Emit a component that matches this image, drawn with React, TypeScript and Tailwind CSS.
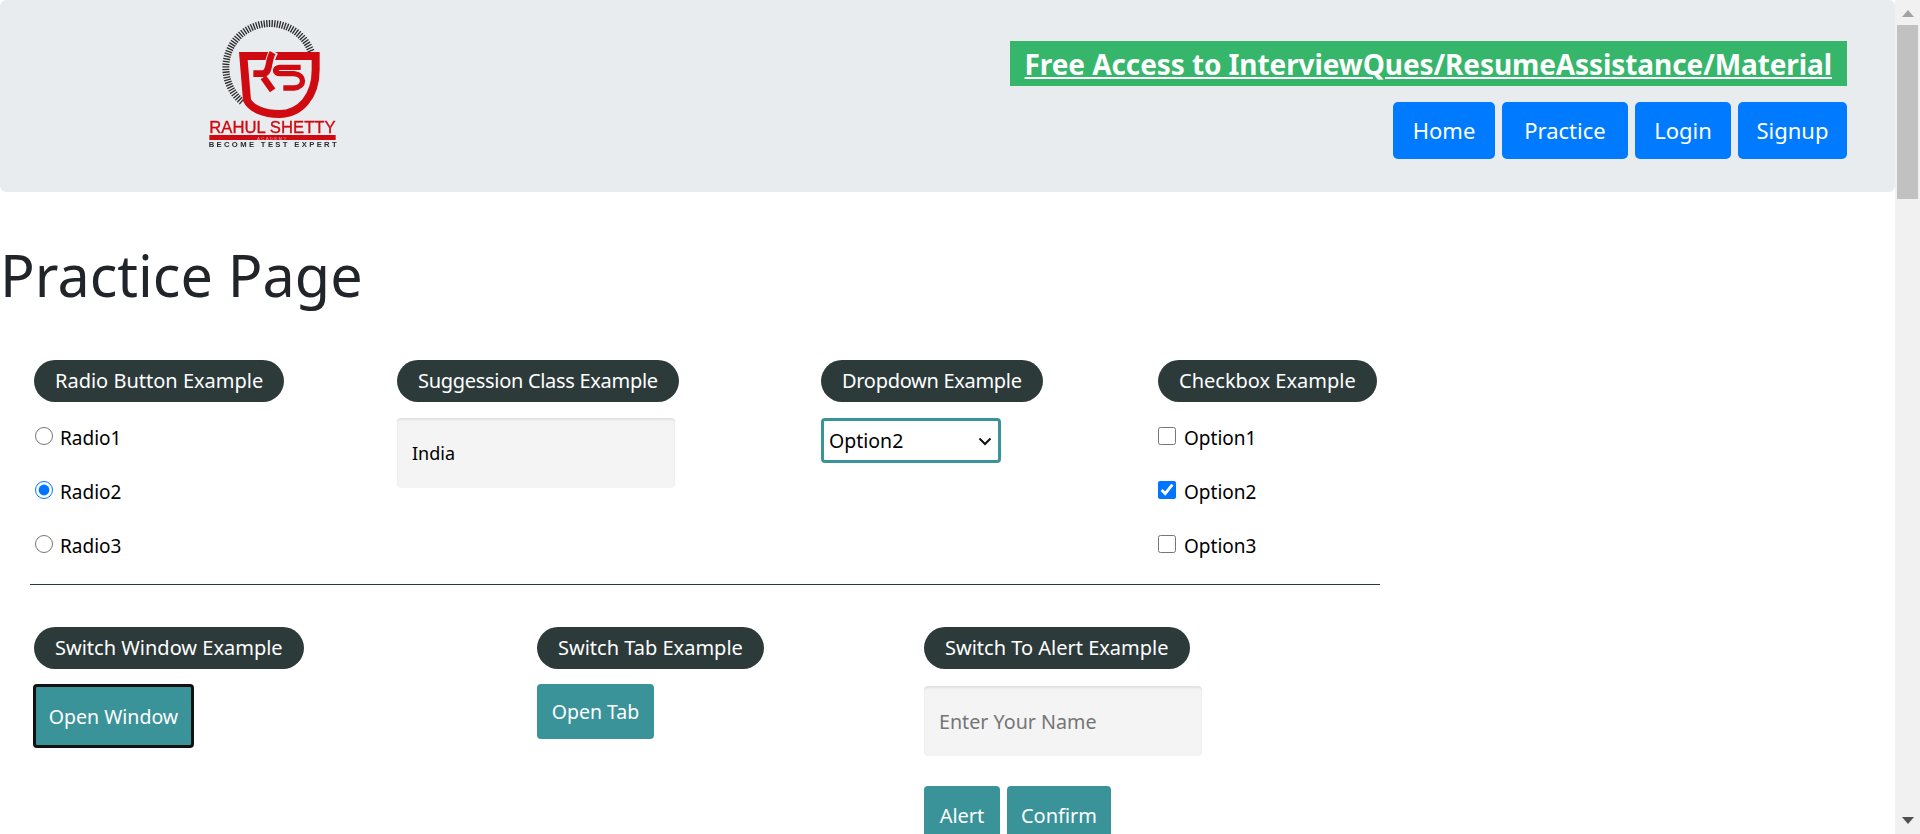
import React from "react";

const FONT = "font-['Noto_Sans',sans-serif]";

const RED = "#cf0a10";

function Logo() {
  const ticks = [];
  for (let a = -140; a <= 70; a += 3.4) {
    const r = (a * Math.PI) / 180;
    const cx = 270, cy = 203;
    ticks.push(
      <line
        key={a}
        x1={cx + Math.sin(r) * 143}
        y1={cy - Math.cos(r) * 143}
        x2={cx + Math.sin(r) * 122}
        y2={cy - Math.cos(r) * 122}
        stroke="#2b2b2b"
        strokeWidth="4"
      />
    );
  }
  return (
    <svg width="200" height="170" viewBox="0 0 600 510" className="block shrink-0 blur-[0.4px]">
      {ticks}
      <path d="M190 168H407V210C407 290 360 342 298 342C250 342 212 325 201 300Z" fill="#e9ecef" stroke={RED} strokeWidth="24" strokeLinejoin="miter" />
      <path d="M220 221H250C272 216 262 185 282 154" fill="none" stroke="#e9ecef" strokeWidth="28" />
      <path d="M220 221H250C272 216 262 185 278 158" fill="none" stroke={RED} strokeWidth="20" />
      <path d="M250 232L278 271" fill="none" stroke={RED} strokeWidth="20" />
      <path d="M362 202H300C282 202 282 221 300 221H342C376 224 376 262 342 264H310" fill="none" stroke={RED} strokeWidth="16" />
      <text x="88" y="398" fontFamily="'Liberation Sans',sans-serif" fontSize="50" fill={RED} stroke={RED} strokeWidth="1" textLength="379" lengthAdjust="spacingAndGlyphs">RAHUL SHETTY</text>
      <rect x="88" y="405" width="379" height="15" fill={RED} />
      <text x="277" y="419" textAnchor="middle" fontFamily="'Liberation Sans',sans-serif" fontSize="13" fill="#e9a0a0" letterSpacing="4">ACADEMY</text>
      <text x="86" y="442" fontFamily="'Liberation Sans',sans-serif" fontSize="23" fontWeight="700" fill="#2b2b2b" textLength="384">BECOME TEST EXPERT</text>
    </svg>
  );
}

function Pill({ children, className = "" }: { children: React.ReactNode; className?: string }) {
  return (
    <div className={`inline-flex h-[42px] items-center rounded-[21px] bg-[#2d3a3a] px-[21px] text-[20px] text-white ${className}`}>
      {children}
    </div>
  );
}

function Choice({ type, name, label, checked, radio }: { type: string; name?: string; label: string; checked?: boolean; radio?: boolean }) {
  return (
    <label className="flex h-[54px] items-center text-[19px] text-black">
      <input
        type={type}
        name={name}
        defaultChecked={checked}
        className={`m-0 h-[18px] w-[18px] accent-[#0075ff] ${radio ? "ml-[1px] mr-[7px]" : "mr-[8px]"}`}
      />
      <span className="pt-[4px]">{label}</span>
    </label>
  );
}

function TealButton({ children, className }: { children: React.ReactNode; className: string }) {
  return (
    <button className={`rounded-[4px] bg-[#3a9399] text-white ${className}`}>{children}</button>
  );
}

const inputClass =
  "h-[70px] w-[278px] rounded-[4px] bg-[#f4f4f4] px-[15px] text-black placeholder:text-[#757575] shadow-[inset_0_2px_2px_rgba(0,0,0,0.08)] outline-none";

function NavButton({ children, width }: { children: React.ReactNode; width: string }) {
  return (
    <a className={`flex h-[57px] items-center justify-center rounded-[5px] bg-[#007bff] text-[22px] text-white ${width}`}>{children}</a>
  );
}

export default function App() {
  return (
    <div className={`flex h-[834px] w-full overflow-hidden bg-white ${FONT}`}>
      <main className="min-w-0 flex-1">
        <header className="flex h-[192px] items-start justify-between rounded-[6px] bg-[#e9ecef] pr-[48px]">
          <div className="pl-[180px]">
            <Logo />
          </div>
          <div className="flex flex-col items-end pt-[41px]">
            <a className="flex h-[45px] items-center bg-[#36b66b] px-[15px] text-[28px] font-bold tracking-[-0.09px] text-white underline">
              Free Access to InterviewQues/ResumeAssistance/Material
            </a>
            <nav className="mt-[16px] flex gap-[7px]">
              <NavButton width="w-[102px]">Home</NavButton>
              <NavButton width="w-[126px]">Practice</NavButton>
              <NavButton width="w-[96px]">Login</NavButton>
              <NavButton width="w-[109px]">Signup</NavButton>
            </nav>
          </div>
        </header>

        <h1 className="flex h-[168px] items-start pt-[48px] text-[57.5px] leading-[70px] text-[#212529]">Practice Page</h1>

        <section className="ml-[30px] flex h-[225px] w-[1350px] border-b border-[#2d3a3a] pl-[4px]">
          <div className="w-[363px]">
            <Pill>Radio Button Example</Pill>
            <div className="mt-[7px]">
              <Choice type="radio" name="r" label="Radio1" radio />
              <Choice type="radio" name="r" label="Radio2" checked radio />
              <Choice type="radio" name="r" label="Radio3" radio />
            </div>
          </div>
          <div className="w-[424px]">
            <Pill className="tracking-[-0.3px]">Suggession Class Example</Pill>
            <input className={`mt-[16px] block text-[18px] ${inputClass}`} defaultValue="India" />
          </div>
          <div className="w-[337px]">
            <Pill className="tracking-[-0.3px]">Dropdown Example</Pill>
            <div className="relative mt-[16px] w-[180px]">
              <select
                defaultValue="Option2"
                className="block h-[45px] w-full appearance-none rounded-[4px] border-[3px] border-[#3a9399] bg-white pl-[5px] text-[19.5px] text-black outline-none"
              >
                <option>Select</option>
                <option>Option1</option>
                <option>Option2</option>
                <option>Option3</option>
              </select>
              <svg width="14" height="9" viewBox="0 0 14 9" className="pointer-events-none absolute right-[9px] top-[19px]">
                <path d="M1.5 1.5L7 7L12.5 1.5" fill="none" stroke="#111111" strokeWidth="2" />
              </svg>
            </div>
          </div>
          <div>
            <Pill>Checkbox Example</Pill>
            <div className="mt-[7px]">
              <Choice type="checkbox" label="Option1" />
              <Choice type="checkbox" label="Option2" checked />
              <Choice type="checkbox" label="Option3" />
            </div>
          </div>
        </section>

        <section className="ml-[34px] mt-[42px] flex">
          <div className="w-[503px]">
            <Pill>Switch Window Example</Pill>
            <TealButton className="-ml-[1px] mt-[15px] block h-[64px] w-[161px] border-[3px] border-[#111111] pt-[2px] text-[19.5px]">Open Window</TealButton>
          </div>
          <div className="w-[387px]">
            <Pill>Switch Tab Example</Pill>
            <TealButton className="mt-[15px] block h-[55px] w-[117px] text-[19.5px]">Open Tab</TealButton>
          </div>
          <div>
            <Pill>Switch To Alert Example</Pill>
            <input className={`mt-[17px] block text-[19.7px] ${inputClass}`} placeholder="Enter Your Name" />
            <div className="mt-[30px] flex gap-[7px]">
              <TealButton className="h-[55px] w-[76px] pt-[4px] text-[20px]">Alert</TealButton>
              <TealButton className="h-[55px] w-[104px] pt-[4px] text-[20px]">Confirm</TealButton>
            </div>
          </div>
        </section>
      </main>

      <aside className="flex h-full w-[25px] shrink-0 flex-col items-center bg-[#f1f1f1]">
        <svg width="12" height="7" viewBox="0 0 12 7" className="mt-[10px] shrink-0"><path d="M6 0L12 7H0Z" fill="#a3a3a3" /></svg>
        <div className="mt-[8px] h-[174px] w-[21px] bg-[#c1c1c1]" />
        <svg width="12" height="7" viewBox="0 0 12 7" className="mt-auto mb-[10px] shrink-0"><path d="M6 7L12 0H0Z" fill="#505050" /></svg>
      </aside>
    </div>
  );
}
